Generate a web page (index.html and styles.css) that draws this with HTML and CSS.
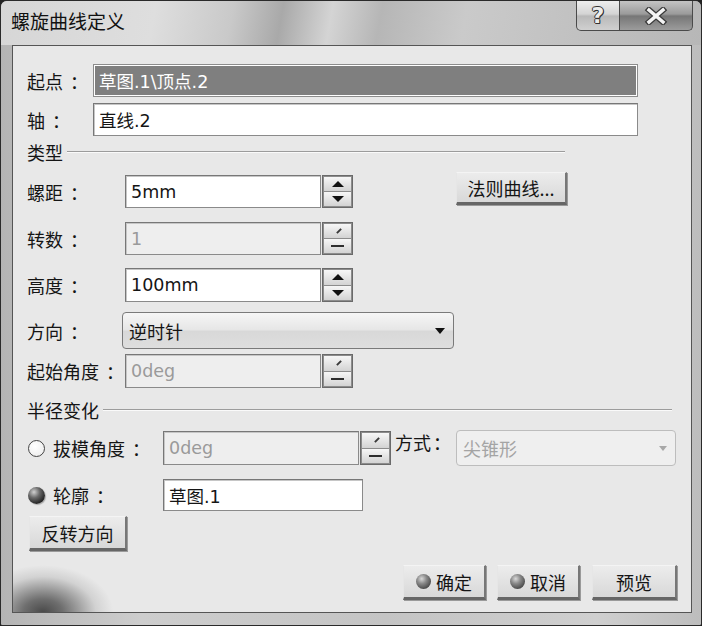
FILE: index.html
```html
<!DOCTYPE html>
<html lang="zh-CN">
<head>
    <meta charset="UTF-8">
    <title>螺旋曲线定义</title>
    <link rel="stylesheet" href="styles.css">
</head>
<body>
<div class="window">
    <div class="titlebar">
        <span class="title">螺旋曲线定义</span>
        <div class="caption">
            <span class="cap-help">?</span>
            <span class="cap-close">
                <svg width="24" height="18" viewBox="0 0 24 18">
                    <path d="M5 3 L19 15 M19 3 L5 15" stroke="#3a3a3a" stroke-width="6" stroke-linecap="square"/>
                    <path d="M5 3 L19 15 M19 3 L5 15" stroke="#f4f4f4" stroke-width="3.4" stroke-linecap="square"/>
                </svg>
            </span>
        </div>
    </div>

    <div class="panel">
        <div class="row top-row">
            <span class="label top-label">起点<span class="colon">：</span></span>
            <div class="field wide selected">草图.1\顶点.2</div>
        </div>
        <div class="row top-row axis-row">
            <span class="label top-label">轴<span class="colon">：</span></span>
            <div class="field wide">直线.2</div>
        </div>

        <div class="group-head type-head">
            <span class="group-title">类型</span>
            <i class="rule"></i>
        </div>

        <div class="row type-row pitch-row">
            <span class="label type-label">螺距<span class="colon">：</span></span>
            <div class="field num">5mm</div>
            <div class="spin">
                <span class="spin-btn"><i class="tri-up"></i></span>
                <span class="spin-btn"><i class="tri-down"></i></span>
            </div>
            <button class="btn law-btn">法则曲线...</button>
        </div>
        <div class="row type-row turns-row">
            <span class="label type-label">转数<span class="colon">：</span></span>
            <div class="field num disabled">1</div>
            <div class="spin">
                <span class="spin-btn"><i class="tick"></i></span>
                <span class="spin-btn"><i class="dash"></i></span>
            </div>
        </div>
        <div class="row type-row height-row">
            <span class="label type-label">高度<span class="colon">：</span></span>
            <div class="field num">100mm</div>
            <div class="spin">
                <span class="spin-btn"><i class="tri-up"></i></span>
                <span class="spin-btn"><i class="tri-down"></i></span>
            </div>
        </div>
        <div class="row type-row dir-row">
            <span class="label dir-label">方向<span class="colon">：</span></span>
            <div class="combo dir-combo">
                <span>逆时针</span>
                <i class="combo-arrow"></i>
            </div>
        </div>
        <div class="row type-row angle-row">
            <span class="label type-label">起始角度<span class="colon">：</span></span>
            <div class="field num disabled">0deg</div>
            <div class="spin">
                <span class="spin-btn"><i class="tick"></i></span>
                <span class="spin-btn"><i class="dash"></i></span>
            </div>
        </div>

        <div class="group-head radius-head">
            <span class="group-title">半径变化</span>
            <i class="rule"></i>
        </div>

        <div class="row draft-row">
            <span class="radio empty"></span>
            <span class="label radio-label">拔模角度<span class="colon">：</span></span>
            <div class="field draft-field disabled">0deg</div>
            <div class="spin draft-spin">
                <span class="spin-btn"><i class="tick"></i></span>
                <span class="spin-btn"><i class="dash"></i></span>
            </div>
            <span class="label mode-label">方式<span class="colon">：</span></span>
            <div class="combo mode-combo disabled">
                <span>尖锥形</span>
                <i class="combo-arrow"></i>
            </div>
        </div>
        <div class="row profile-row">
            <span class="radio checked"></span>
            <span class="label radio-label">轮廓<span class="colon">：</span></span>
            <div class="field profile-field">草图.1</div>
        </div>

        <div class="row reverse-row">
            <button class="btn reverse-btn">反转方向</button>
        </div>

        <div class="row footer">
            <button class="btn foot-btn ok-btn"><i class="ball"></i>确定</button>
            <button class="btn foot-btn cancel-btn"><i class="ball"></i>取消</button>
            <button class="btn foot-btn preview-btn">预览</button>
        </div>
    </div>
</div>
</body>
</html>
```

FILE: styles.css
```css
* {
    box-sizing: border-box;
}
body {
    margin: 0;
    background: #222;
    font-family: "DejaVu Sans", "Noto Sans CJK SC", sans-serif;
    color: #151515;
}
.window {
    width: 702px;
    height: 626px;
    border: 1px solid #2a2a2a;
    border-radius: 7px 7px 2px 2px;
    background: linear-gradient(90deg, #b4b4b4, #cdcdcd 20%, #c4c4c4 55%, #cfcfcf 85%, #bdbdbd);
    padding: 0 9px 12px 11px;
    display: flex;
    flex-direction: column;
}
.titlebar {
    height: 44px;
    margin: 0 -9px 0 -11px;
    padding: 0 9px 0 11px;
    display: flex;
    justify-content: space-between;
    align-items: flex-start;
    border-radius: 6px 6px 0 0;
    background: linear-gradient(100deg, #d6d6d6 0%, #dedede 22%, #c9c9c9 33%, #a9a9a9 40%, #d4d4d4 47%, #b6b6b6 54%, #cacaca 66%, #c1c1c1 82%, #b7b7b7 100%);
}
.title {
    font-family: "Noto Sans CJK SC", sans-serif;
    font-size: 19px;
    line-height: 24px;
    margin: 8px 0 0 -1px;
    color: #111;
}
.caption {
    display: flex;
    margin-right: -1px;
}
.cap-help {
    width: 44px;
    height: 30px;
    border: 1px solid #4a4a4a;
    border-top: none;
    border-radius: 0 0 0 5px;
    background: linear-gradient(#eeeeee, #d4d4d4 45%, #b9b9b9 52%, #d0d0d0);
    display: flex;
    justify-content: center;
    align-items: center;
    font-family: "DejaVu Sans", sans-serif;
    font-weight: bold;
    font-size: 22px;
    color: #ececec;
    text-shadow: 1px 0 #333, -1px 0 #333, 0 1px #333, 0 -1px #333, 1px 1px #333;
}
.cap-close {
    width: 73px;
    height: 30px;
    border: 1px solid #4a4a4a;
    border-top: none;
    border-left: none;
    border-radius: 0 0 5px 0;
    background: linear-gradient(#c4c4c4, #9a9a9a 45%, #767676 52%, #9c9c9c);
    display: flex;
    justify-content: center;
    align-items: center;
}

.panel {
    height: 568px;
    border: 1px solid #555;
    background:
        radial-gradient(ellipse 78px 52px at 30px 100%, #4a4a4a 0%, #6e6e6e 25%, #a8a8a8 50%, #d2d2d2 68%, rgba(232, 232, 232, 0) 90%),
        #e8e8e8;
    padding: 18px 14px 0 14px;
    display: flex;
    flex-direction: column;
}
.row {
    display: flex;
    align-items: center;
}
.label {
    font-family: "Noto Sans CJK SC", sans-serif;
    font-size: 18px;
    line-height: 22px;
    white-space: nowrap;
}
.colon {
    padding-left: 7px;
}
.top-row {
    height: 33px;
}
.axis-row {
    margin-top: 6px;
}
.top-label {
    width: 66px;
}
.field {
    height: 33px;
    border: 1px solid #8a8a8a;
    border-top-color: #777;
    border-left-color: #777;
    box-shadow: inset 1px 1px 0 #c6c6c6;
    background: #fff;
    padding: 0 5px;
    display: flex;
    align-items: center;
    font-size: 17.5px;
    white-space: nowrap;
}
.wide {
    width: 545px;
}
.selected {
    background: #7f7f7f;
    color: #fff;
    border-color: #8c8c8c;
    box-shadow: inset 0 0 0 1px #fff;
}
.disabled {
    background: #eeeeee;
    color: #9a9a9a;
}

.group-head {
    height: 22px;
    display: flex;
    align-items: center;
}
.group-title {
    font-family: "Noto Sans CJK SC", sans-serif;
    font-size: 18px;
    line-height: 22px;
}
.rule {
    height: 2px;
    margin-left: 4px;
    border-top: 1px solid #9c9c9c;
    border-bottom: 1px solid #fafafa;
    margin-top: -1px;
}
.type-head {
    margin-top: 5px;
}
.type-head .rule {
    width: 498px;
}
.radius-head {
    margin-top: 11px;
}
.radius-head .rule {
    width: 569px;
}

.type-row {
    height: 33px;
}
.pitch-row {
    margin-top: 12px;
}
.turns-row {
    margin-top: 14px;
}
.height-row {
    margin-top: 13px;
    height: 34px;
}
.dir-row {
    margin-top: 10px;
    height: 37px;
}
.angle-row {
    margin-top: 5px;
    height: 34px;
}
.type-label {
    width: 98px;
}
.dir-label {
    width: 95px;
}
.num {
    width: 196px;
    height: 100%;
}
.spin {
    width: 31px;
    height: 100%;
    margin-left: 1px;
    border: 1px solid #6a6a6a;
    background: #8c8c8c;
    padding: 1px;
    display: flex;
    flex-direction: column;
    gap: 1px;
}
.spin-btn {
    flex: 1;
    background: linear-gradient(#f7f7f7, #d3d3d3);
    display: flex;
    justify-content: center;
    align-items: center;
}
.tri-up {
    border-left: 6px solid transparent;
    border-right: 6px solid transparent;
    border-bottom: 6px solid #111;
}
.tri-down {
    border-left: 6px solid transparent;
    border-right: 6px solid transparent;
    border-top: 6px solid #111;
}
.tick {
    width: 6px;
    height: 2px;
    background: #3a3a3a;
    transform: rotate(-45deg);
    margin-left: 2px;
}
.dash {
    width: 13px;
    height: 2px;
    background: #2e2e2e;
}

.btn {
    font-family: "Noto Sans CJK SC", sans-serif;
    font-size: 18px;
    color: #151515;
    padding: 0;
    background: linear-gradient(#ececec, #d8d8d8);
    border-top: 1px solid #f4f4f4;
    border-left: 1px solid #e6e6e6;
    border-right: 2px solid #777;
    border-bottom: 3px solid #666;
    box-shadow: 1px 1px 0 #9a9a9a;
    display: flex;
    justify-content: center;
    align-items: center;
}
.law-btn {
    width: 111px;
    height: 33px;
    margin-left: 103px;
    margin-top: -6px;
}

.combo {
    height: 100%;
    border: 1px solid #7a7a7a;
    border-radius: 4px;
    background: linear-gradient(#f6f6f6, #e6e6e6 48%, #d8d8d8 52%, #dedede);
    display: flex;
    align-items: center;
    justify-content: space-between;
    padding: 0 8px 0 6px;
    font-family: "Noto Sans CJK SC", sans-serif;
    font-size: 18px;
}
.dir-combo {
    width: 332px;
}
.combo-arrow {
    border-left: 5px solid transparent;
    border-right: 5px solid transparent;
    border-top: 6px solid #111;
}
.mode-combo {
    width: 220px;
    height: 36px;
    margin-left: 4px;
    border-color: #bdbdbd;
    background: #efefef;
    color: #a4a4a4;
}
.mode-combo .combo-arrow {
    border-top-color: #a8a8a8;
    border-left-width: 4px;
    border-right-width: 4px;
    border-top-width: 5px;
}

.draft-row {
    margin-top: 9px;
    height: 36px;
}
.profile-row {
    margin-top: 13px;
    height: 32px;
}
.radio {
    width: 17px;
    height: 17px;
    border-radius: 50%;
    margin-left: 1px;
    margin-right: 8px;
    flex-shrink: 0;
}
.radio.empty {
    border: 1px solid #444;
    background: radial-gradient(circle at 40% 35%, #ffffff, #eaeaea);
}
.radio.checked {
    background: radial-gradient(circle at 35% 30%, #d0d0d0 0%, #6a6a6a 35%, #2a2a2a 70%, #111 100%);
    box-shadow: 1px 1px 1px #aaa;
}
.radio-label {
    width: 110px;
}
.draft-field {
    width: 196px;
    height: 34px;
}
.draft-spin {
    height: 34px;
    margin-left: 1px;
}
.mode-label {
    align-self: flex-start;
    margin-top: 1px;
    margin-left: 4px;
    width: 57px;
}
.mode-label .colon {
    padding-left: 2px;
}
.profile-field {
    width: 200px;
    height: 32px;
}

.reverse-row {
    margin-top: 5px;
}
.reverse-btn {
    width: 98px;
    height: 35px;
    margin-left: 2px;
}

.footer {
    margin-top: 14px;
    justify-content: flex-end;
    gap: 11px;
}
.foot-btn {
    height: 35px;
    width: 83px;
}
.preview-btn {
    width: 85px;
    margin-left: 1px;
}
.ball {
    width: 15px;
    height: 15px;
    border-radius: 50%;
    margin-right: 5px;
    background: radial-gradient(circle at 38% 32%, #d8d8d8 0%, #8a8a8a 35%, #4a4a4a 75%, #333 100%);
}
```
